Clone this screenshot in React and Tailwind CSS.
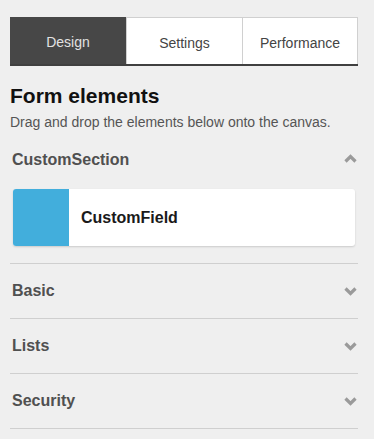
import React from "react";

function Chevron({ up }) {
  return (
    <svg width="13" height="9" viewBox="0 0 13 9" className={up ? "rotate-180" : ""}>
      <path d="M1.5 1.5 L6.5 6.5 L11.5 1.5" fill="none" stroke="#9a9a9a" strokeWidth="3.2" strokeLinejoin="miter" />
    </svg>
  );
}

function Header({ title, up }) {
  return (
    <div className="flex items-center justify-between py-[17px] pl-[2px] pr-[1px]">
      <span className="text-[16px] leading-[20px] font-bold text-[#505050]">{title}</span>
      <span className={up ? "-mt-[3px]" : ""}>
        <Chevron up={up} />
      </span>
    </div>
  );
}

export default function App() {
  return (
    <div
      className="w-[374px] h-[439px] bg-[#efefef] pt-[17px] px-[10px] overflow-hidden"
      style={{ fontFamily: '"Liberation Sans", Arial, sans-serif' }}
    >
      <div className="w-[348px]">
        <div className="flex h-[49px] border-b-2 border-[#404040]">
          <div className="w-[116px] bg-[#474747] text-[#e2e2e2] text-[14px] flex items-center justify-center pt-1">
            Design
          </div>
          <div className="w-[116px] bg-white border-t border-l border-[#d0d0d0] text-[#444] text-[14px] flex items-center justify-center pt-1">
            Settings
          </div>
          <div className="w-[116px] bg-white border-t border-l border-r border-[#d0d0d0] text-[#444] text-[14px] flex items-center justify-center pt-1">
            Performance
          </div>
        </div>

        <h1 className="mt-[18px] text-[21px] leading-[24px] font-bold text-[#111]">Form elements</h1>
        <p className="mt-[6px] text-[14px] leading-[16px] text-[#555] whitespace-nowrap">
          Drag and drop the elements below onto the canvas.
        </p>

        <div className="mt-[3px]">
          <div className="border-b border-[#cfcfcf]">
            <Header title="CustomSection" up />
            <div className="pt-[2px] pb-[17px] px-[3px]">
              <div className="flex h-[57px] bg-white rounded-[3px] shadow-[0_1px_2px_rgba(0,0,0,0.15)] overflow-hidden">
                <div className="w-[56px] bg-[#42aedc]" />
                <div className="flex items-center pl-[12px] text-[16px] font-bold text-[#1a1a1a]">CustomField</div>
              </div>
            </div>
          </div>
          <div className="border-b border-[#cfcfcf]">
            <Header title="Basic" />
          </div>
          <div className="border-b border-[#cfcfcf]">
            <Header title="Lists" />
          </div>
          <div className="border-b border-[#cfcfcf]">
            <Header title="Security" />
          </div>
        </div>
      </div>
    </div>
  );
}
